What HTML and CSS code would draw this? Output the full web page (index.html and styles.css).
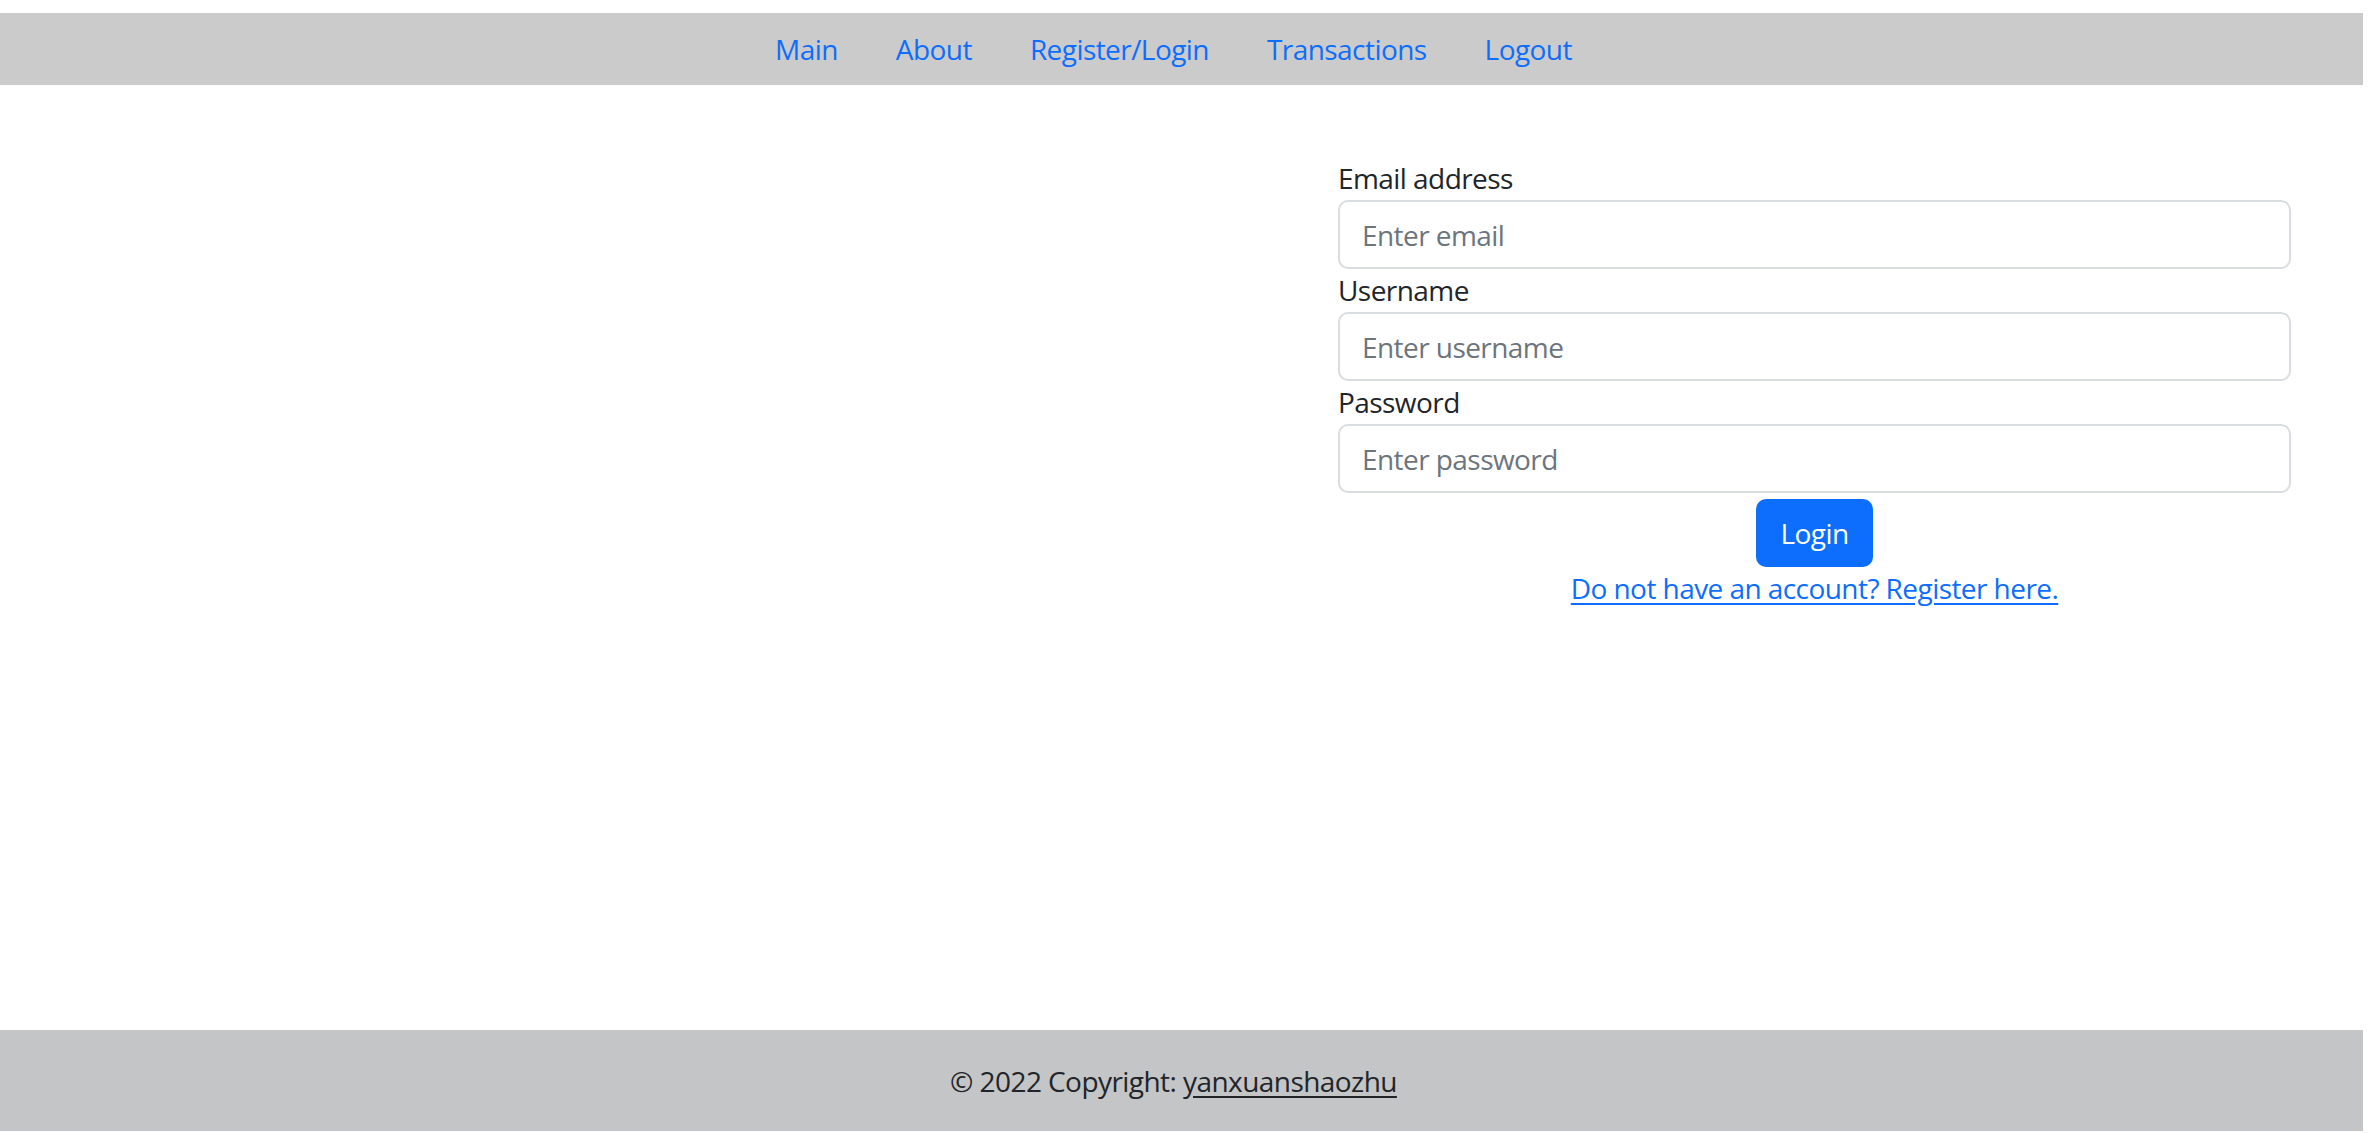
FILE: index.html
```html
<!DOCTYPE html>
<html lang="en">
<head>
<meta charset="utf-8">
<title>Login</title>
<link rel="stylesheet" href="styles.css">
</head>
<body>
<div class="page">
  <header class="topbar">
    <nav class="nav">
      <a class="nav-link" href="#">Main</a>
      <a class="nav-link" href="#">About</a>
      <a class="nav-link" href="#">Register/Login</a>
      <a class="nav-link" href="#">Transactions</a>
      <a class="nav-link" href="#">Logout</a>
    </nav>
  </header>
  <main class="content">
    <div class="side"></div>
    <form class="login-form">
      <label class="form-label" for="email">Email address</label>
      <input class="form-control" id="email" type="email" placeholder="Enter email">
      <label class="form-label" for="username">Username</label>
      <input class="form-control" id="username" type="text" placeholder="Enter username">
      <label class="form-label" for="password">Password</label>
      <input class="form-control" id="password" type="password" placeholder="Enter password">
      <div class="actions">
        <button class="btn" type="button">Login</button>
        <a class="register-link" href="#">Do not have an account? Register here.</a>
      </div>
    </form>
  </main>
  <footer class="footer">
    <span>© 2022 Copyright: <a class="footer-link" href="#">yanxuanshaozhu</a></span>
  </footer>
</div>
</body>
</html>
```
FILE: styles.css
```css
html {
  height: 100%;
}
body {
  box-sizing: border-box;
  height: calc(100% - 15px);
  margin: 13px 8px 2px 0;
  font-family: "Open Sans", "Noto Sans", sans-serif;
  font-size: 28px;
  line-height: 42px;
  letter-spacing: -0.02em;
  color: #212529;
  background: #ffffff;
  overflow: hidden;
}
.page {
  height: 100%;
  display: flex;
  flex-direction: column;
}
.topbar {
  background: #cbcbcb;
  height: 72px;
  flex: none;
  display: flex;
  align-items: center;
  justify-content: center;
  padding-right: 16px;
}
.nav {
  display: flex;
}
.nav-link {
  color: #0d6efd;
  text-decoration: none;
  padding: 14px 29px;
}
.content {
  flex: 1;
  display: grid;
  grid-template-columns: 1fr 953px;
  padding: 72px 72px 0 0;
  align-items: start;
}
.login-form {
  display: flex;
  flex-direction: column;
}
.form-label {
  display: block;
  line-height: 43px;
}
.form-control {
  box-sizing: border-box;
  height: 69px;
  padding: 10px 22px;
  font-family: inherit;
  font-size: 28px;
  letter-spacing: inherit;
  line-height: 42px;
  color: #212529;
  border: 2px solid #d9dde1;
  border-radius: 10px;
  outline: none;
  background: #ffffff;
}
.form-control::placeholder {
  color: #6c757d;
}
.actions {
  display: flex;
  flex-direction: column;
  align-items: center;
  margin-top: 6px;
}
.btn {
  height: 68px;
  padding: 0 24px;
  font-family: inherit;
  font-size: 28px;
  letter-spacing: inherit;
  line-height: 42px;
  color: #ffffff;
  background: #0d6efd;
  border: none;
  border-radius: 10px;
}
.register-link {
  color: #0d6efd;
  text-decoration: underline;
  text-underline-offset: 4px;
}
.footer {
  background: #c4c5c7;
  height: 101px;
  flex: none;
  display: flex;
  align-items: center;
  justify-content: center;
  padding-right: 16px;
}
.footer-link {
  color: #212529;
  text-decoration: underline;
  text-underline-offset: 4px;
}
```
